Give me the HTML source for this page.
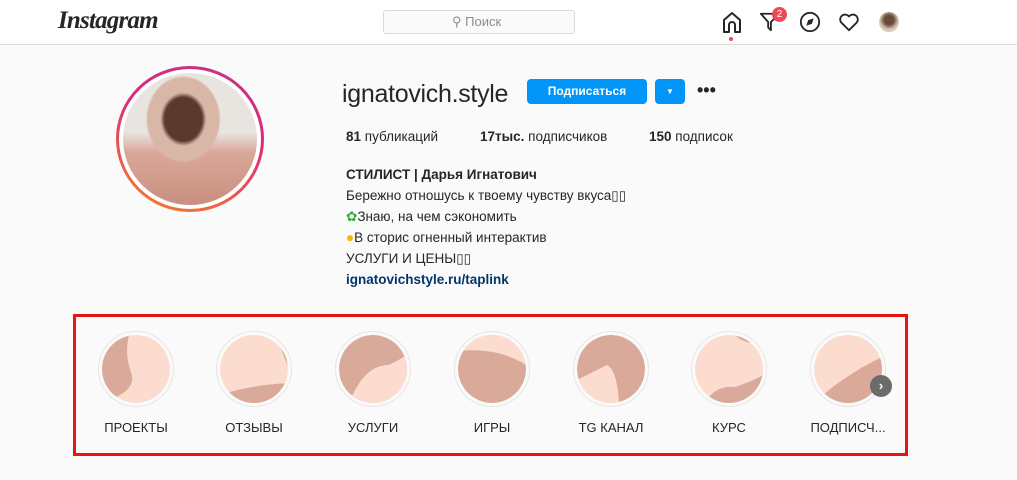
<!DOCTYPE html>
<html><head><meta charset="utf-8"><style>
*{margin:0;padding:0;box-sizing:border-box}
body{width:1017px;height:480px;background:#fafafa;font-family:"Liberation Sans",sans-serif;color:#262626;position:relative;overflow:hidden}
.hdr{position:absolute;left:0;top:0;width:1017px;height:45px;background:#fff;border-bottom:1px solid #dbdbdb}
.abs{position:absolute}
.t{position:absolute;white-space:nowrap}
.hl{position:absolute;width:76px;height:76px;border-radius:50%;border:1px solid #e6e6e6;background:#fafafa;top:331px}
.hl svg{position:absolute;left:3px;top:3px;border-radius:50%}
.lb{position:absolute;top:420px;font-size:13px;width:120px;text-align:center;color:#262626}
</style></head><body>
<div class="hdr">
  <div class="t" style="left:58px;top:7px;font-family:'Liberation Serif',serif;font-style:italic;font-size:25px;font-weight:bold;letter-spacing:-0.8px;color:#262626">Instagram</div>
  <div class="abs" style="left:383px;top:10px;width:192px;height:24px;border:1px solid #dbdbdb;border-radius:3px;background:#fafafa"></div>
  <div class="t" style="left:452px;top:14px;font-size:13px;color:#8e8e8e">⚲ Поиск</div>
  <svg class="abs" style="left:720px;top:10px" width="24" height="24" viewBox="0 0 24 24"><path d="M4 22V10l8-7 8 7v12h-5v-7a3 3 0 0 0-6 0v7z" fill="none" stroke="#262626" stroke-width="2" stroke-linejoin="round"/></svg>
  <div class="abs" style="left:729px;top:37px;width:4px;height:4px;border-radius:2px;background:#ed4956"></div>
  <svg class="abs" style="left:759px;top:11px" width="22" height="22" viewBox="0 0 24 24"><path d="M2 3h20L13 12v9l-3-3v-6z" fill="none" stroke="#262626" stroke-width="2" stroke-linejoin="round"/></svg>
  <div class="abs" style="left:772px;top:7px;width:15px;height:15px;border-radius:8px;background:#ed4956;color:#fff;font-size:10px;text-align:center;line-height:15px">2</div>
  <svg class="abs" style="left:799px;top:11px" width="22" height="22" viewBox="0 0 24 24"><circle cx="12" cy="12" r="10" fill="none" stroke="#262626" stroke-width="2"/><path d="M16 8l-2 6-6 2 2-6z" fill="#262626"/></svg>
  <svg class="abs" style="left:838px;top:11px" width="22" height="22" viewBox="0 0 24 24"><path d="M12 21l-8.5-8.5A5 5 0 0 1 12 6a5 5 0 0 1 8.5 6.5z" fill="none" stroke="#262626" stroke-width="2" stroke-linejoin="round"/></svg>
  <div class="abs" style="left:879px;top:12px;width:20px;height:20px;border-radius:50%;background:radial-gradient(circle at 50% 40%,#6a4a3a 30%,#d8c8b8 60%)"></div>
</div>
<div class="abs" style="left:116px;top:66px;width:148px;height:146px;border-radius:50%;background:linear-gradient(20deg,#f58529,#dd2a7b 60%,#c13584)"></div>
<div class="abs" style="left:119px;top:69px;width:142px;height:140px;border-radius:50%;background:#fff"></div>
<div class="abs" style="left:123px;top:73px;width:134px;height:132px;border-radius:50%;background:radial-gradient(ellipse at 45% 35%,#5a3a2e 0 18%,#d9b7a6 22% 34%,transparent 36%),linear-gradient(180deg,#e8e4e0 0 45%,#d9a898 60%,#c98f80 100%)"></div>
<div class="t" style="left:342px;top:80px;font-size:25px;font-weight:300;letter-spacing:-0.3px;color:#262626">ignatovich.style</div>
<div class="abs" style="left:527px;top:79px;width:120px;height:25px;border-radius:4px;background:#0095f6;color:#fff;font-size:12px;font-weight:bold;text-align:center;line-height:25px">Подписаться</div>
<div class="abs" style="left:655px;top:79px;width:30px;height:25px;border-radius:4px;background:#0095f6;color:#fff;font-size:8px;text-align:center;line-height:25px">▼</div>
<div class="t" style="left:697px;top:80px;font-size:18px;font-weight:bold;letter-spacing:0px">•••</div>
<div class="t" style="left:346px;top:129px;font-size:13.5px"><b>81</b> публикаций</div>
<div class="t" style="left:480px;top:129px;font-size:13.5px"><b>17тыс.</b> подписчиков</div>
<div class="t" style="left:649px;top:129px;font-size:13.5px"><b>150</b> подписок</div>
<div class="t" style="left:346px;top:164px;font-size:13.5px;line-height:21px">
<b>СТИЛИСТ | Дарья Игнатович</b><br>Бережно отношусь к твоему чувству вкуса▯▯<br><span style="color:#3a3">✿</span>Знаю, на чем сэкономить<br><span style="color:#f5b800">●</span>В сторис огненный интерактив<br>УСЛУГИ И ЦЕНЫ▯▯<br><b style="color:#00376b;font-weight:bold">ignatovichstyle.ru/taplink</b></div>
<div class="abs" style="left:73px;top:314px;width:835px;height:142px;border:3px solid #e8140f"></div>

<div class="hl" style="left:98px"><svg width="68" height="68"><circle cx="34" cy="34" r="34" fill="#fddcd0"/><path d="M0 0H27Q22 20 30 40Q32 52 18 60L0 68Z" fill="#d9aa99"/></svg></div>
<div class="hl" style="left:216px"><svg width="68" height="68"><circle cx="34" cy="34" r="34" fill="#fddcd0"/><path d="M0 60Q30 50 68 48V68H0Z" fill="#d9aa99"/><path d="M58 0Q62 20 68 30V0Z" fill="#d9aa99"/></svg></div>
<div class="hl" style="left:335px"><svg width="68" height="68"><circle cx="34" cy="34" r="34" fill="#d9aa99"/><path d="M10 68Q25 30 50 30Q60 25 68 20V68Z" fill="#fddcd0"/></svg></div>
<div class="hl" style="left:454px"><svg width="68" height="68"><circle cx="34" cy="34" r="34" fill="#d9aa99"/><path d="M0 0H68V30Q40 12 0 16Z" fill="#fddcd0"/></svg></div>
<div class="hl" style="left:573px"><svg width="68" height="68"><circle cx="34" cy="34" r="34" fill="#d9aa99"/><path d="M0 68V45Q20 35 30 30Q40 35 42 68Z" fill="#fddcd0"/></svg></div>
<div class="hl" style="left:691px"><svg width="68" height="68"><circle cx="34" cy="34" r="34" fill="#fddcd0"/><path d="M10 68Q20 50 40 52Q60 45 68 40V68Z" fill="#d9aa99"/><path d="M40 0Q50 10 68 8V0Z" fill="#d9aa99"/></svg></div>
<div class="hl" style="left:810px"><svg width="68" height="68"><circle cx="34" cy="34" r="34" fill="#fddcd0"/><path d="M0 68Q30 40 68 22V68Z" fill="#d9aa99"/></svg></div>
<div class="abs" style="left:870px;top:375px;width:22px;height:22px;border-radius:50%;background:#6b6b6b;color:#fff;font-size:13px;font-weight:bold;text-align:center;line-height:22px">›</div>

<div class="lb" style="left:76px">ПРОЕКТЫ</div>
<div class="lb" style="left:194px">ОТЗЫВЫ</div>
<div class="lb" style="left:313px">УСЛУГИ</div>
<div class="lb" style="left:432px">ИГРЫ</div>
<div class="lb" style="left:551px">TG КАНАЛ</div>
<div class="lb" style="left:669px">КУРС</div>
<div class="lb" style="left:788px">ПОДПИСЧ...</div>
</body></html>
